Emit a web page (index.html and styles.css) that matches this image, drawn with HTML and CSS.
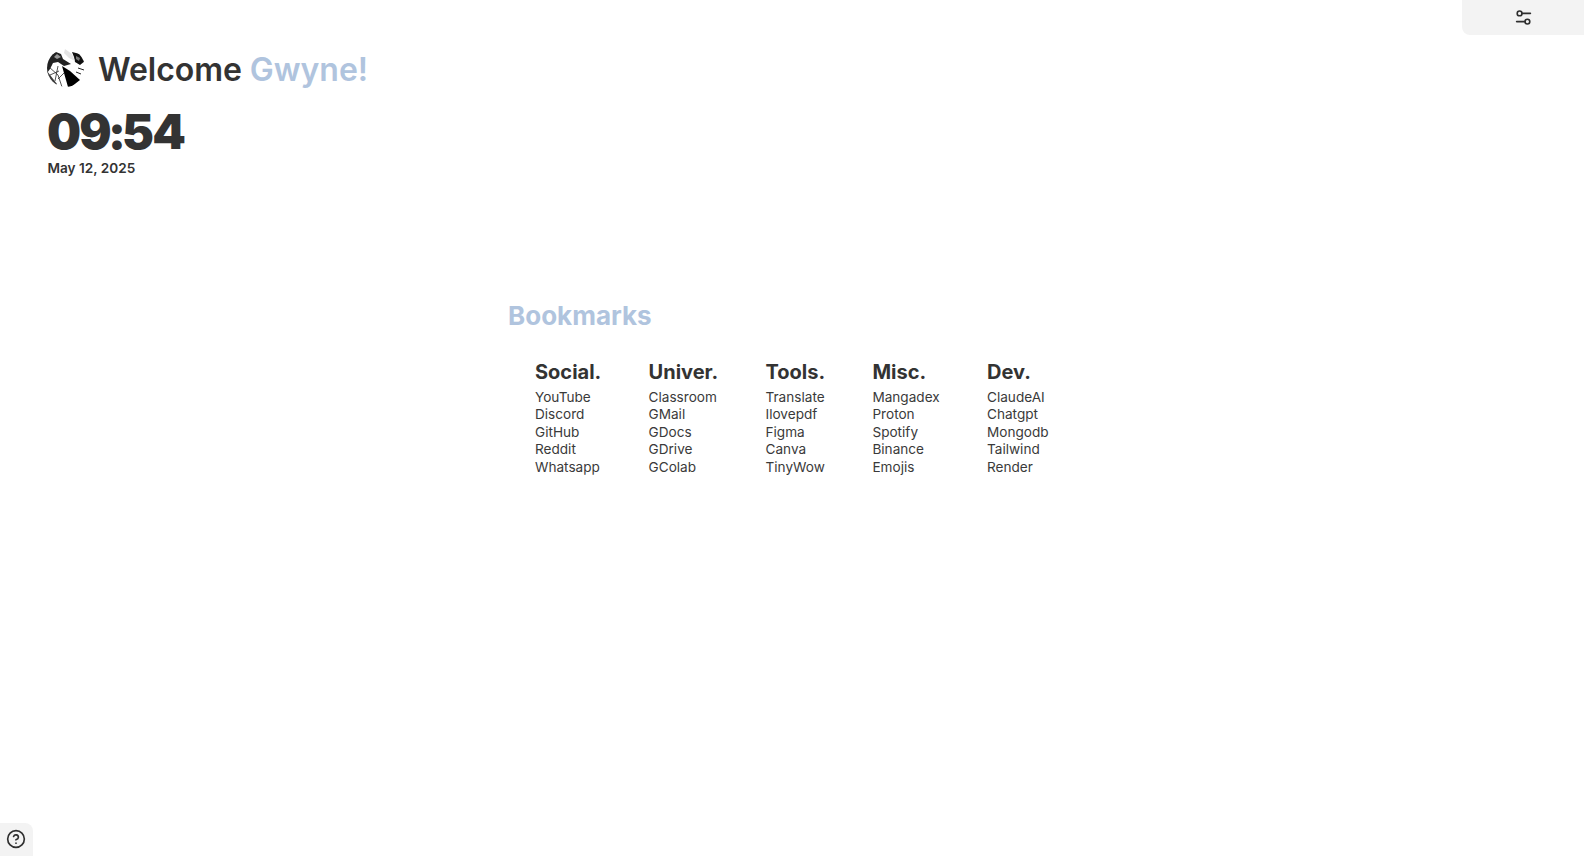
FILE: index.html
```html
<!DOCTYPE html>
<html lang="en">
<head>
<meta charset="utf-8">
<title>Welcome</title>
<link rel="stylesheet" href="styles.css">
</head>
<body>
<button class="settings" aria-label="Settings">
<svg width="18" height="18" viewBox="0 0 18 18" fill="none" stroke="#2f2f2f" stroke-width="1.6" stroke-linecap="round"><circle cx="4.6" cy="4.4" r="2.4"/><path d="M7 4.4h8.4"/><circle cx="12.4" cy="12.6" r="2.4"/><path d="M1.6 12.6h8.4"/></svg>
</button>
<main class="page">
<header class="head">
<div class="welcome">
<svg class="avatar" width="38" height="38" viewBox="0 0 38 38"><defs><clipPath id="c"><circle cx="19" cy="19" r="19"/></clipPath></defs><g clip-path="url(#c)"><rect width="38" height="38" fill="#fff"/><path d="M0 8 9 3 14 5 16 10 24 15 17 17 11 13 6 14 3 20 0 24Z" fill="#222"/><path d="M10 5 14 8 10 10 7 8Z" fill="#999"/><path d="M25 3 33 5 38 12 33 16 28 13 27 8Z" fill="#111"/><path d="M29 7 33 9 32 12 29 10Z" fill="#777"/><path d="M18 0 25 5 28 12 22 9 17 4Z" fill="#e4e4e4"/><path d="M15 17 23 22 33 31 24 38 21 38Z" fill="#000"/><path d="M0 22 10 35 8 38 0 32Z" fill="#3a3a3a"/><path d="M2 18 11 26 15 38M11 17 8 32M17 24 11 30M3 26 12 22" stroke="#2a2a2a" stroke-width=".8" fill="none"/><path d="M31 19 37 21M29 23 34 25" stroke="#222" stroke-width="1"/></g></svg>
<h1 class="title">Welcome <span class="accent">Gwyne!</span></h1>
</div>
<div class="clock">09<span class="colon">:</span>54</div>
<div class="date">May 12, 2025</div>
</header>
<section class="bookmarks">
<h2 class="bm-title">Bookmarks</h2>
<div class="cols">
<div class="col"><h3>Social.</h3><a>YouTube</a><a>Discord</a><a>GitHub</a><a>Reddit</a><a>Whatsapp</a></div>
<div class="col"><h3>Univer.</h3><a>Classroom</a><a>GMail</a><a>GDocs</a><a>GDrive</a><a>GColab</a></div>
<div class="col"><h3>Tools.</h3><a>Translate</a><a>Ilovepdf</a><a>Figma</a><a>Canva</a><a>TinyWow</a></div>
<div class="col"><h3>Misc.</h3><a>Mangadex</a><a>Proton</a><a>Spotify</a><a>Binance</a><a>Emojis</a></div>
<div class="col"><h3>Dev.</h3><a>ClaudeAI</a><a>Chatgpt</a><a>Mongodb</a><a>Tailwind</a><a>Render</a></div>
</div>
</section>
</main>
<button class="help" aria-label="Help">
<svg width="20" height="20" viewBox="0 0 24 24" fill="none" stroke="#2f2f2f" stroke-width="2" stroke-linecap="round" stroke-linejoin="round"><circle cx="12" cy="12" r="10"/><path d="M9.1 9a3 3 0 0 1 5.8 1c0 2-3 3-3 3"/><path d="M12 17h.01"/></svg>
</button>
</body>
</html>
```
FILE: styles.css
```css
* { box-sizing: border-box; margin: 0; padding: 0; }
html, body { height: 100%; }
body { font-family: Inter, "Liberation Sans", sans-serif; color: #333; background: #fff; overflow: hidden; -webkit-font-smoothing: antialiased; }
.page { padding: 48px 47px 0; }
.welcome { display: flex; align-items: center; gap: 13px; height: 40px; }
.avatar { flex: none; }
.title { font-size: 32px; font-weight: 600; line-height: 44px; padding-top: 3px; white-space: nowrap; letter-spacing: -0.05px; }
.accent { color: #b0c4de; }
.clock { font-size: 48px; font-weight: 900; line-height: 58px; margin-top: 15px; letter-spacing: -1.8px; }
.colon { margin: 0 -2px 0 -2px; }
.date { font-size: 13.6px; font-weight: 600; line-height: 17px; margin-top: -1px; padding-left: 0.5px; }
.bookmarks { margin: 122px 0 0 461px; }
.bm-title { color: #b0c4de; font-size: 26px; font-weight: 700; line-height: 33px; }
.cols { display: flex; gap: 47.3px; margin: 28px 0 0 27px; }
.col { display: flex; flex-direction: column; }
.col h3 { font-size: 20px; font-weight: 700; line-height: 25px; margin-bottom: 4px; }
.col a { font-size: 13.6px; line-height: 17.4px; color: #3a3a3a; }
.settings { position: fixed; top: 0; right: 0; width: 122px; height: 35px; padding-left: 2px; background: #f3f3f3; border: 0; border-bottom-left-radius: 8px; display: flex; align-items: center; justify-content: center; }
.help { position: fixed; left: 0; bottom: 0; width: 33px; height: 33px; padding: 0 2px 2px 0; background: #f3f3f3; border: 0; border-top-right-radius: 8px; display: flex; align-items: center; justify-content: center; }
```
